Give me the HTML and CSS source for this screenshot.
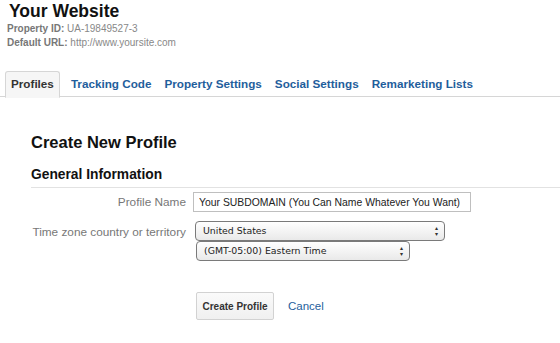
FILE: index.html
```html
<!DOCTYPE html>
<html lang="en">
<head>
    <meta charset="UTF-8">
    <title>Create New Profile</title>
    <link rel="stylesheet" href="styles.css">
</head>
<body>
    <div class="header">
        <h1>Your Website</h1>
        <div class="meta"><b>Property ID:</b> UA-19849527-3</div>
        <div class="meta"><b>Default URL:</b> http://www.yoursite.com</div>
    </div>

    <div class="tabs">
        <a class="tab active" href="#">Profiles</a>
        <a class="tab" href="#">Tracking Code</a>
        <a class="tab" href="#">Property Settings</a>
        <a class="tab" href="#">Social Settings</a>
        <a class="tab" href="#">Remarketing Lists</a>
    </div>

    <div class="content">
        <h2>Create New Profile</h2>
        <h3>General Information</h3>

        <div class="row">
            <label class="label">Profile Name</label>
            <input class="text" type="text" value="Your SUBDOMAIN (You Can Name Whatever You Want)">
        </div>

        <div class="row">
            <label class="label">Time zone country or territory</label>
            <div class="selects">
                <div class="select wide">United States<span class="arrows">&#9652;<br>&#9662;</span></div>
                <div class="select narrow">(GMT-05:00) Eastern Time<span class="arrows">&#9652;<br>&#9662;</span></div>
            </div>
        </div>

        <div class="actions">
            <button class="button">Create Profile</button>
            <a href="#" class="cancel">Cancel</a>
        </div>
    </div>
</body>
</html>
```

FILE: styles.css
```css
body {
    margin: 0;
    background-color: #FFFFFF;
    color: #222222;
    font-family: "Liberation Sans", Arial, Helvetica, sans-serif;
    font-size: 12px;
}
a {
    color: #1F5E9C;
    text-decoration: none;
}
.header {
    padding: 0 0 0 7px;
}
h1 {
    margin: 0;
    font-size: 17.5px;
    line-height: 22px;
    color: #111111;
    padding-left: 2px;
}
.meta {
    font-size: 10px;
    line-height: 14px;
    color: #888888;
}
.meta b {
    color: #777777;
}
.tabs {
    display: flex;
    margin-top: 21px;
    padding-left: 5px;
    border-bottom: 1px solid #D6D6D6;
    height: 25px;
}
.tab {
    font-weight: bold;
    font-size: 11.7px;
    line-height: 24px;
    padding: 1px 6px 0;
    margin-right: 1px;
    color: #1F5E9C;
}
.tab.active {
    color: #333333;
    background-color: #F6F6F6;
    border: 1px solid #D6D6D6;
    border-bottom: 1px solid #F6F6F6;
    border-radius: 3px 3px 0 0;
    padding: 0 5px;
    margin-right: 5px;
    height: 25px;
}
.content {
    padding: 35px 0 0 31px;
}
h2 {
    margin: 0;
    font-size: 16.5px;
    line-height: 20px;
    color: #111111;
}
h3 {
    margin: 14px 0 0;
    font-size: 13.8px;
    line-height: 18px;
    color: #111111;
    padding-bottom: 3px;
    border-bottom: 1px solid #E2E2E2;
}
.row {
    display: flex;
    align-items: flex-start;
    margin-top: 4px;
}
.row + .row {
    margin-top: 10px;
}
.label {
    width: 155px;
    text-align: right;
    color: #777777;
    font-size: 11.8px;
    line-height: 20px;
    padding-right: 7px;
}
.text {
    width: 278px;
    height: 20px;
    box-sizing: border-box;
    border: 1px solid #BFBFBF;
    padding: 0 3px 0 5px;
    font-family: "Liberation Sans", Arial, sans-serif;
    font-size: 10.4px;
    color: #222222;
    margin: 0;
}
.selects {
    display: flex;
    flex-direction: column;
    padding-left: 2px;
    margin-top: -1px;
}
.select {
    position: relative;
    box-sizing: border-box;
    height: 20px;
    border: 1px solid #7A7A7A;
    border-radius: 4px;
    background: linear-gradient(#FFFFFF, #E9E9E9);
    font-family: "DejaVu Sans", sans-serif;
    font-size: 9.4px;
    line-height: 18px;
    padding-left: 7px;
    color: #222222;
}
.select.wide {
    width: 250px;
}
.select.narrow {
    width: 214px;
    margin-left: 1px;
}
.arrows {
    position: absolute;
    right: 6px;
    top: 3px;
    font-size: 6px;
    line-height: 6px;
    color: #333333;
}
.actions {
    display: flex;
    align-items: center;
    margin-top: 31px;
    padding-left: 165px;
}
.button {
    height: 28px;
    width: 78px;
    border: 1px solid #D2D2D2;
    border-radius: 2px;
    background: linear-gradient(#FAFAFA, #F0F0F0);
    font-family: "Liberation Sans", Arial, sans-serif;
    font-weight: bold;
    font-size: 10px;
    color: #333333;
    padding: 0;
}
.cancel {
    margin-left: 14px;
    font-size: 11.5px;
}
```
